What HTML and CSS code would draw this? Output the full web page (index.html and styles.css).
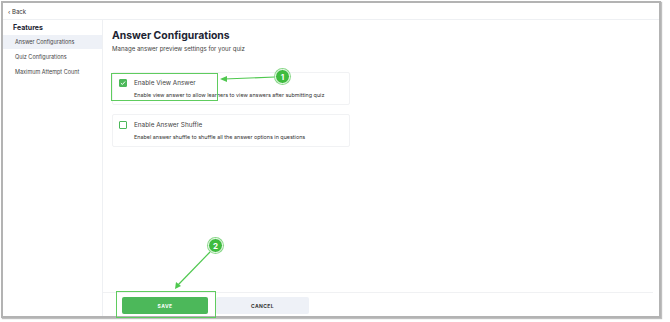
FILE: index.html
```html
<!DOCTYPE html>
<html lang="en">
<head>
    <meta charset="UTF-8">
    <title>Answer Configurations</title>
    <link rel="stylesheet" href="styles.css">
</head>
<body>
    <div class="window">
        <div class="topbar">
            <a class="back-link">&lsaquo; Back</a>
        </div>

        <div class="layout">
            <aside class="sidebar">
                <div class="sidebar-title">Features</div>
                <div class="sidebar-item active">Answer Configurations</div>
                <div class="sidebar-item">Quiz Configurations</div>
                <div class="sidebar-item">Maximum Attempt Count</div>
            </aside>

            <main class="main">
                <div class="content">
                    <h1 class="page-title">Answer Configurations</h1>
                    <p class="page-subtitle">Manage answer preview settings for your quiz</p>

                    <div class="option-card">
                        <div class="option-head">
                            <span class="checkbox checked">
                                <svg viewBox="0 0 10 10" width="6" height="6"><path d="M1.5 5.2 L4 7.5 L8.5 2.5" fill="none" stroke="#fff" stroke-width="1.6"/></svg>
                            </span>
                            <span class="option-label">Enable View Answer</span>
                        </div>
                        <div class="option-desc">Enable view answer to allow learners to view answers after submitting quiz</div>
                    </div>

                    <div class="option-card">
                        <div class="option-head">
                            <span class="checkbox"></span>
                            <span class="option-label">Enable Answer Shuffle</span>
                        </div>
                        <div class="option-desc">Enabel answer shuffle to shuffle all the answer options in questions</div>
                    </div>
                </div>

                <div class="footer">
                    <button class="btn btn-save">SAVE</button>
                    <button class="btn btn-cancel">CANCEL</button>
                </div>
            </main>
        </div>

        <!-- annotations -->
        <div class="mark mark-1"></div>
        <div class="mark mark-2"></div>
        <svg class="arrows" width="670" height="322" viewBox="0 0 670 322">
            <line x1="275" y1="77" x2="224" y2="79" stroke="#4fc84f" stroke-width="1.2"/>
            <path d="M220 79 L227 76 L227 82 Z" fill="#4fc84f"/>
            <line x1="210" y1="252" x2="178" y2="285" stroke="#4fc84f" stroke-width="1.2"/>
            <path d="M175 289 L176 282 L181 286 Z" fill="#4fc84f"/>
        </svg>
        <div class="badge badge-1">1</div>
        <div class="badge badge-2">2</div>
    </div>
</body>
</html>
```

FILE: styles.css
```css
* {
    box-sizing: border-box;
}

body {
    margin: 0;
    width: 670px;
    height: 322px;
    background: #fff;
    font-family: 'Inter', 'Liberation Sans', sans-serif;
    color: #1d2433;
    overflow: hidden;
}

.window {
    position: relative;
    margin: 1px 0 0 1px;
    width: 660px;
    height: 317px;
    border: 2px solid #b3b3b3;
    box-shadow: 1px 1px 1px rgba(0, 0, 0, 0.25);
    display: flex;
    flex-direction: column;
    background: #fff;
}

.topbar {
    height: 17px;
    border-bottom: 1px solid #eef0f3;
    padding: 5px 0 0 5px;
    font-size: 6px;
}

.back-link {
    color: #333;
}

.layout {
    flex: 1;
    display: flex;
}

.sidebar {
    width: 100px;
    border-right: 1px solid #eef0f3;
    padding-top: 3px;
}

.sidebar-title {
    font-size: 7px;
    line-height: 9px;
    font-weight: 700;
    padding: 0 0 3px 10px;
}

.sidebar-item {
    font-size: 5.5px;
    line-height: 14px;
    color: #444;
    padding-left: 12px;
    margin-bottom: 1px;
}

.sidebar-item.active {
    background: #eef1f7;
}

.main {
    flex: 1;
    display: flex;
    flex-direction: column;
    padding: 0 6px 0 0;
}

.content {
    flex: 1;
    padding: 9px 0 0 9px;
}

.page-title {
    margin: 0;
    font-size: 10.4px;
    line-height: 13px;
    font-weight: 700;
}

.page-subtitle {
    margin: 3px 0 19px;
    font-size: 6.1px;
    line-height: 8px;
    color: #444;
}

.option-card {
    width: 238px;
    height: 33px;
    border: 1px solid #f1f2f4;
    border-radius: 2px;
    padding: 6px 0 0 6px;
    margin-bottom: 9px;
}

.option-head {
    display: flex;
    align-items: center;
    gap: 7px;
}

.checkbox {
    width: 8px;
    height: 8px;
    border: 1px solid #4cb85a;
    border-radius: 1px;
    display: flex;
    align-items: center;
    justify-content: center;
}

.checkbox.checked {
    background: #4cb85a;
}

.option-label {
    font-size: 6.4px;
    color: #444;
}

.option-desc {
    margin: 5px 0 0 15px;
    font-size: 5.4px;
    color: #333;
}

.footer {
    height: 24px;
    border-top: 1px solid #f0f1f3;
    padding: 4px 0 0 19px;
    display: flex;
    gap: 8px;
}

.btn {
    height: 17px;
    border: none;
    border-radius: 2px;
    font-family: 'Inter', 'Liberation Sans', sans-serif;
    font-size: 5px;
    font-weight: 700;
    letter-spacing: 0.4px;
}

.btn-save {
    width: 86px;
    background: #4cb85a;
    color: #fff;
}

.btn-cancel {
    width: 93px;
    background: #eef1f7;
    color: #333;
}

.mark {
    position: absolute;
    border: 1.5px solid #5fcc5f;
}

.mark-1 {
    left: 108px;
    top: 70px;
    width: 107px;
    height: 28px;
}

.mark-2 {
    left: 113px;
    top: 288px;
    width: 100px;
    height: 27px;
}

.arrows {
    position: absolute;
    left: -3px;
    top: -3px;
    pointer-events: none;
}

.badge {
    position: absolute;
    width: 15px;
    height: 15px;
    border-radius: 50%;
    background: #3fbc3f;
    border: 1px solid #fff;
    box-shadow: 0 0 0 1px #8bd88b;
    color: #fff;
    font-size: 8px;
    font-weight: 700;
    display: flex;
    align-items: center;
    justify-content: center;
}

.badge-1 {
    left: 272px;
    top: 66px;
}

.badge-2 {
    left: 205px;
    top: 235px;
}
```
